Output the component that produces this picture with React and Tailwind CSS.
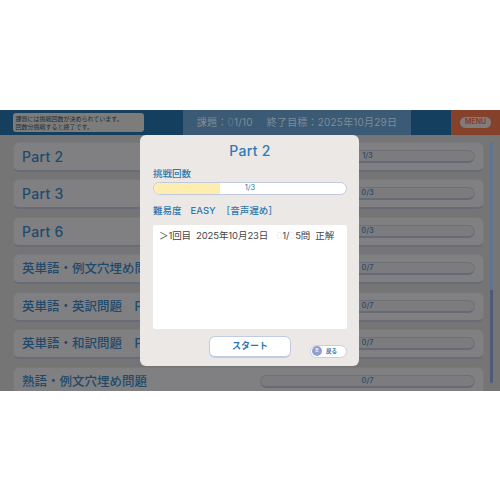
const font = { fontFamily: 'Inter, "Noto Sans CJK JP", "Noto Sans", sans-serif' };

const rows = [
  { name: "Part 2", count: "1/3", big: true },
  { name: "Part 3", count: "0/3", big: true },
  { name: "Part 6", count: "0/3", big: true },
  { name: "英単語・例文穴埋め問題　Part 1", count: "0/7" },
  { name: "英単語・英訳問題　Part 1", count: "0/7" },
  { name: "英単語・和訳問題　Part 1", count: "0/7" },
  { name: "熟語・例文穴埋め問題", count: "0/7" },
];

function Row({ name, count, big }) {
  return (
    <div className="flex h-[30px] shrink-0 items-center rounded-[6px] border border-[#77797e] border-b-2 border-b-[#696c78] bg-[#808083] pl-[8px] pr-[8px]">
      <span className={`flex-1 whitespace-nowrap font-medium text-[#1f4a6c] ${big ? "text-[14px] tracking-[0.3px]" : "pt-[2px] text-[12.5px]"}`}>
        {name}
      </span>
      <div className="flex h-[13px] w-[215px] shrink-0 items-center justify-center rounded-full border border-[#6f7076] border-b-2 border-b-[#666a78] bg-[#7c7c7e] text-[7.5px] font-medium text-[#2a4a68]">
        {count}
      </div>
    </div>
  );
}

export default function App() {
  return (
    <div className="flex h-[500px] w-[500px] items-center bg-white" style={font}>
      <div className="relative flex h-[281px] w-full flex-col overflow-hidden bg-[#757575]">
        {/* header */}
        <div className="flex h-[25px] shrink-0">
          <div className="flex w-[183px] items-center bg-[#153f5e] pl-[12.5px]">
            <div className="h-[19px] w-[131px] rounded-[3px] bg-[#7c7d7b] px-[3px] pt-[2px] text-[6px] leading-[8px] text-[#1c2c38]">
              <p className="whitespace-nowrap">課題には挑戦回数が決められています。</p>
              <p className="whitespace-nowrap">回数分挑戦すると終了です。</p>
            </div>
          </div>
          <div className="flex w-[228px] items-center justify-center gap-[14px] bg-[#3a5a75] text-[10px] tracking-[0.2px] text-[#7f8c95]">
            <span>
              課題：<span className="text-[#5f7789]">0</span>1/10
            </span>
            <span>終了目標：2025年10月29日</span>
          </div>
          <div className="w-[40px] bg-[#153f5e]"></div>
          <div className="flex flex-1 items-center justify-center bg-[#85412a]">
            <div className="flex h-[11px] w-[31px] items-center justify-center rounded-full bg-[#807c7a] text-[7px] font-bold text-[#85412a]">
              MENU
            </div>
          </div>
        </div>

        {/* list */}
        <div className="flex flex-1 overflow-hidden pl-[13px] pt-[7px]">
          <div className="flex w-[471px] flex-col gap-[7.5px]">
            {rows.map((r) => (
              <Row key={r.name} {...r} />
            ))}
          </div>
          <div className="ml-[6px] h-[241px] w-[3px] overflow-hidden rounded-full bg-[#4f5a78]">
            <div className="h-[148px] bg-[#5f7490]"></div>
          </div>
        </div>

        {/* dialog */}
        <div className="absolute left-[140px] top-[25px] flex h-[231px] w-[219px] flex-col rounded-[6px] bg-[#ece8e5] pl-[13px] pr-[12px] pt-[6px]">
          <h2 className="text-center text-[14px] font-medium leading-[20px] tracking-[0.3px] text-[#2a7cb8]">Part 2</h2>
          <p className="mt-[7px] text-[9.5px] font-medium leading-[12px] text-[#2f78ad]">挑戦回数</p>
          <div className="relative mt-[2px] flex h-[13px] items-center justify-center overflow-hidden rounded-full border border-[#c3c9dc] bg-white">
            <div className="absolute inset-y-0 left-0 w-[66px] bg-[#fdeeb0]"></div>
            <span className="relative text-[7.5px] text-[#2f78ad]">1/3</span>
          </div>
          <p className="mt-[10px] flex text-[9.5px] font-medium leading-[12px] text-[#2f78ad]">
            <span>難易度</span>
            <span className="ml-[9px]">EASY</span>
            <span className="ml-[5px]">［音声遅め］</span>
          </p>
          <div className="mt-[8px] flex h-[104px] items-start whitespace-nowrap rounded-[2px] bg-white px-[6px] pt-[4px] text-[9.5px] leading-[14px] tracking-[-0.1px] text-[#444]">
            <span>＞1回目</span>
            <span className="ml-[5px]">2025年10月23日</span>
            <span className="ml-[8px]">
              <span className="text-[#eeeeee]">0</span>1/<span className="text-[#eeeeee]">0</span>5問
            </span>
            <span className="ml-[5px]">正解</span>
          </div>
          <div className="relative mt-[7px] flex justify-center">
            <button className="flex h-[22px] w-[82px] items-center justify-center rounded-[6px] border border-[#c0cce4] border-b-2 bg-white text-[9px] font-bold text-[#2f78ad]">
              スタート
            </button>
            <button className="absolute right-0 top-[9px] flex h-[13px] w-[37px] items-center rounded-full border border-[#c8cfe2] bg-white pl-[1px]">
              <span className="flex h-[10px] w-[10px] items-center justify-center rounded-full bg-[#8f9fcf] text-[5px] text-white">B</span>
              <span className="ml-[4px] text-[5.5px] font-bold text-[#2f78ad]">戻る</span>
            </button>
          </div>
        </div>
      </div>
    </div>
  );
}
